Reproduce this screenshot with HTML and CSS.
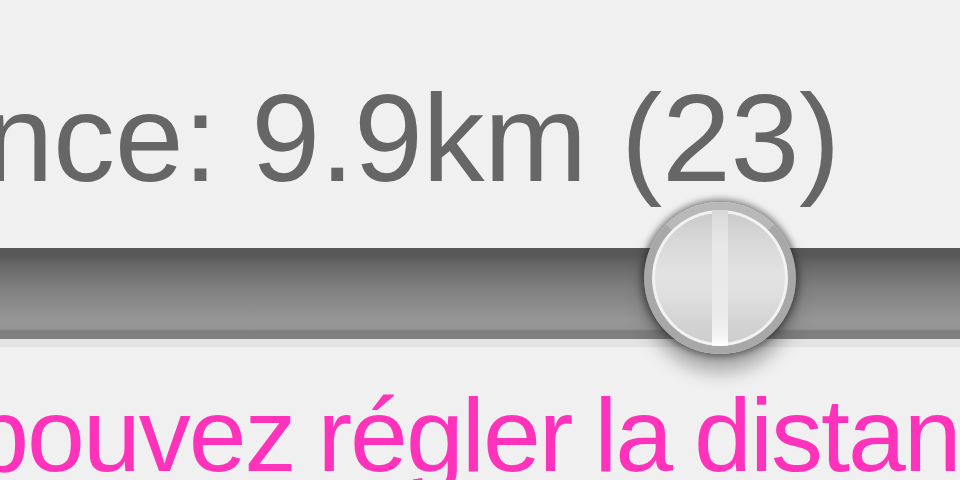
FILE: index.html
```html
<!DOCTYPE html>
<html lang="fr">
<head>
<meta charset="utf-8">
<title>Distance</title>
<link rel="stylesheet" href="styles.css">
</head>
<body>
<main class="panel">
  <p class="label">Distance: 9.9km (23)</p>
  <div class="slider">
    <div class="track"></div>
    <div class="knob"><span class="knob-v"></span></div>
  </div>
  <p class="hint">Vous pouvez régler la distance</p>
</main>
</body>
</html>
```

FILE: styles.css
```css
html, body {
  margin: 0;
  padding: 0;
  width: 960px;
  height: 480px;
  overflow: hidden;
  background: #f0f0f0;
}

.panel {
  display: flex;
  flex-direction: column;
  width: 960px;
  height: 480px;
  overflow: hidden;
  font-family: "Liberation Sans", Arial, sans-serif;
}

.label {
  margin: 74px 0 0 -296px;
  font-size: 124px;
  line-height: 128px;
  letter-spacing: -0.4px;
  color: #666666;
  white-space: nowrap;
}

.slider {
  position: relative;
  margin-top: 46px;
  height: 99px;
}

.track {
  height: 91px;
  margin-left: -20px;
  background: linear-gradient(#585858 0, #595959 9%, #666666 18%, #727272 30%, #808080 45%, #8d8d8d 65%, #969696 80%, #949494 89%, #7e7e7e 91%, #7e7e7e 100%);
  border-bottom: 8px solid #e3e3e3;
}

.knob {
  position: absolute;
  left: 644px;
  top: -46px;
  width: 152px;
  height: 152px;
  box-sizing: border-box;
  border-radius: 50%;
  border: 8px solid #a8a8a8;
  border-top-color: #b8b8b8;
  background: linear-gradient(#c9c9c9 0, #d6d6d6 20%, #e2e2e2 45%, #e0e0e0 60%, #d2d2d2 85%, #cdcdcd 100%);
  box-shadow: inset 0 0 0 3px #f2f2f2, 0 0 6px 3px rgba(30, 30, 30, 0.5), 0 18px 18px rgba(60, 60, 60, 0.4);
  overflow: hidden;
}

.knob-v {
  position: absolute;
  left: 60px;
  top: 0;
  width: 16px;
  height: 100%;
  background: linear-gradient(#d8d8d8, #e8e8e8 25%, #eaeaea 75%, #f2f2f2 92%, #ffffff);
}

.hint {
  margin: 36px 0 0 -275px;
  font-size: 104px;
  line-height: 104px;
  letter-spacing: -2px;
  word-spacing: -4px;
  color: #ff33bb;
  white-space: nowrap;
}
```
